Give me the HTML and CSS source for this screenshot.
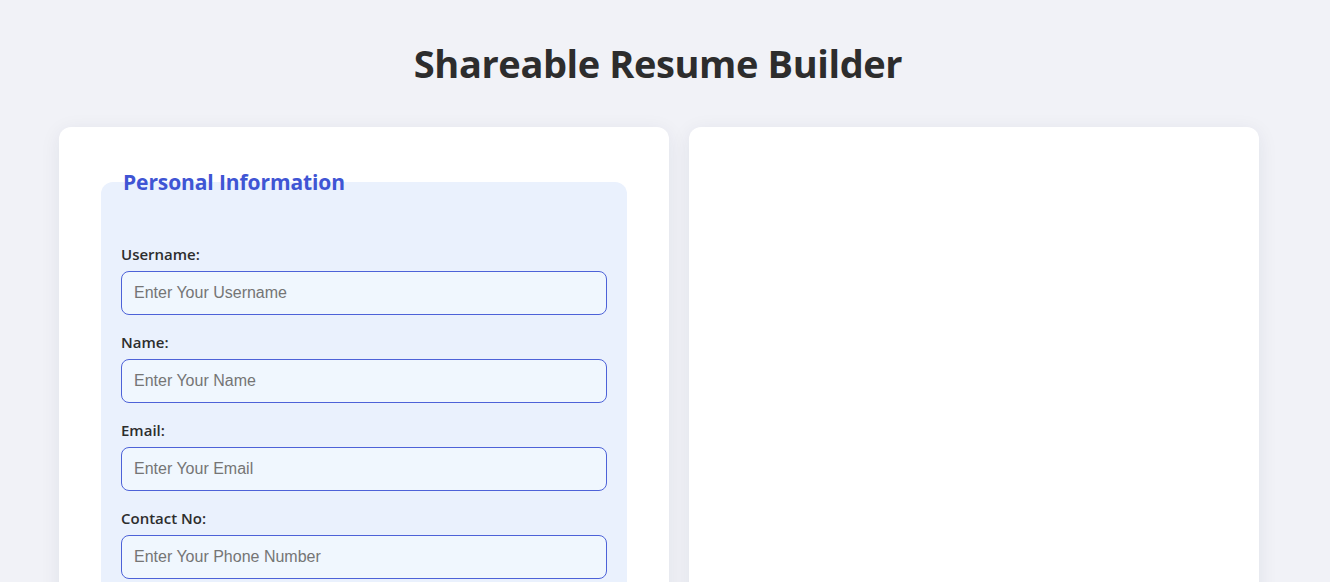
FILE: index.html
```html
<!DOCTYPE html>
<html lang="en">
<head>
<meta charset="utf-8">
<title>Shareable Resume Builder</title>
<link rel="stylesheet" href="styles.css">
</head>
<body>
  <h1 class="title">Shareable Resume Builder</h1>
  <main class="layout">
    <section class="card card-form">
      <form class="form">
        <fieldset class="group">
          <legend class="group-title">Personal Information</legend>
          <div class="field">
            <label class="field-label" for="username">Username:</label>
            <input class="field-input" id="username" type="text" placeholder="Enter Your Username">
          </div>
          <div class="field">
            <label class="field-label" for="name">Name:</label>
            <input class="field-input" id="name" type="text" placeholder="Enter Your Name">
          </div>
          <div class="field">
            <label class="field-label" for="email">Email:</label>
            <input class="field-input" id="email" type="email" placeholder="Enter Your Email">
          </div>
          <div class="field">
            <label class="field-label" for="phone">Contact No:</label>
            <input class="field-input" id="phone" type="tel" placeholder="Enter Your Phone Number">
          </div>
        </fieldset>
      </form>
    </section>
    <section class="card card-preview"></section>
  </main>
</body>
</html>
```
FILE: styles.css
```css
* { box-sizing: border-box; }

html, body {
  margin: 0;
  padding: 0;
  background: #f1f2f7;
  height: 100%;
  overflow: hidden;
}

body {
  font-family: "Open Sans", "Noto Sans", sans-serif;
  color: #2d2d2d;
}

.title {
  margin: 0;
  padding-top: 40px;
  height: 127px;
  text-align: center;
  font-size: 38px;
  line-height: 46px;
  font-weight: 700;
  color: #2d2d2d;
  letter-spacing: -0.4px;
  padding-right: 14px;
}

.layout {
  display: flex;
  gap: 20px;
  padding-left: 59px;
  align-items: stretch;
  height: 700px;
}

.card {
  background: #ffffff;
  border-radius: 12px;
  box-shadow: 0 4px 20px rgba(30, 40, 80, 0.08);
}

.card-form {
  width: 610px;
  padding: 40px 42px;
}

.card-preview {
  width: 570px;
}

.form { margin: 0; }

.group {
  margin: 0;
  border: none;
  background: #eaf1fd;
  border-radius: 12px;
  padding: 48px 20px 20px;
}

.group-title {
  padding: 0 0 0 2px;
  font-size: 21px;
  line-height: 30px;
  font-weight: 700;
  color: #3f55d4;
  letter-spacing: -0.1px;
}

.field {
  display: flex;
  flex-direction: column;
  margin-bottom: 18px;
}

.field-label {
  font-size: 15px;
  line-height: 18px;
  font-weight: 600;
  color: #2d2d2d;
  margin-bottom: 8px;
}

.field-input {
  height: 44px;
  width: 100%;
  border: 1px solid #4d62d8;
  border-radius: 8px;
  background: #f0f7fe;
  padding: 0 12px;
  font-family: "Liberation Sans", Arial, sans-serif;
  font-size: 16px;
  color: #2d2d2d;
  outline: none;
}

.field-input::placeholder {
  color: #757575;
}
```
